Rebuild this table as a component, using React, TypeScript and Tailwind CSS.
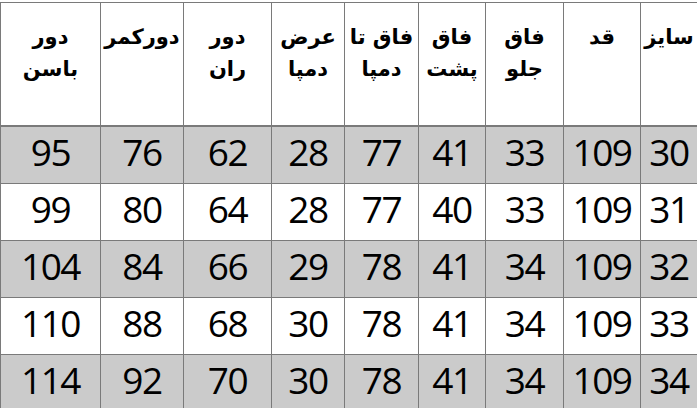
const headers: string[][] = [
  ["سایز"],
  ["قد"],
  ["فاق", "جلو"],
  ["فاق", "پشت"],
  ["فاق تا", "دمپا"],
  ["عرض", "دمپا"],
  ["دور", "ران"],
  ["دورکمر"],
  ["دور", "باسن"],
];

const rows: number[][] = [
  [30, 109, 33, 41, 77, 28, 62, 76, 95],
  [31, 109, 33, 40, 77, 28, 64, 80, 99],
  [32, 109, 34, 41, 78, 29, 66, 84, 104],
  [33, 109, 34, 41, 78, 30, 68, 88, 110],
  [34, 109, 34, 41, 78, 30, 70, 92, 114],
];

export default function App() {
  return (
    <div className="w-[697px] h-[408px] overflow-hidden bg-white">
      <div
        dir="rtl"
        className="mt-[2px] grid grid-cols-[57px_77px_78px_67px_74px_73px_88px_83px_100px] border-t border-[#7a7a7a]"
      >
        {headers.map((lines, i) => (
          <div
            key={i}
            className="h-[124px] border-l border-b-2 border-[#7a7a7a] pt-[18px] text-center text-[21px] leading-[32px] font-bold text-black [font-family:'DejaVu_Sans',sans-serif]"
          >
            {lines.map((l, j) => (
              <div key={j} className="whitespace-nowrap">
                {l}
              </div>
            ))}
          </div>
        ))}
        {rows.map((row, r) =>
          row.map((v, c) => (
            <div
              key={`${r}-${c}`}
              className={`h-[57px] border-l border-b border-[#7a7a7a] flex items-center justify-center pb-[6px] text-[37px] tracking-[-1.5px] text-black [font-family:'Open_Sans',sans-serif] ${
                r % 2 === 0 ? "bg-[#cbcbcb]" : "bg-white"
              }`}
            >
              {v}
            </div>
          ))
        )}
      </div>
    </div>
  );
}
